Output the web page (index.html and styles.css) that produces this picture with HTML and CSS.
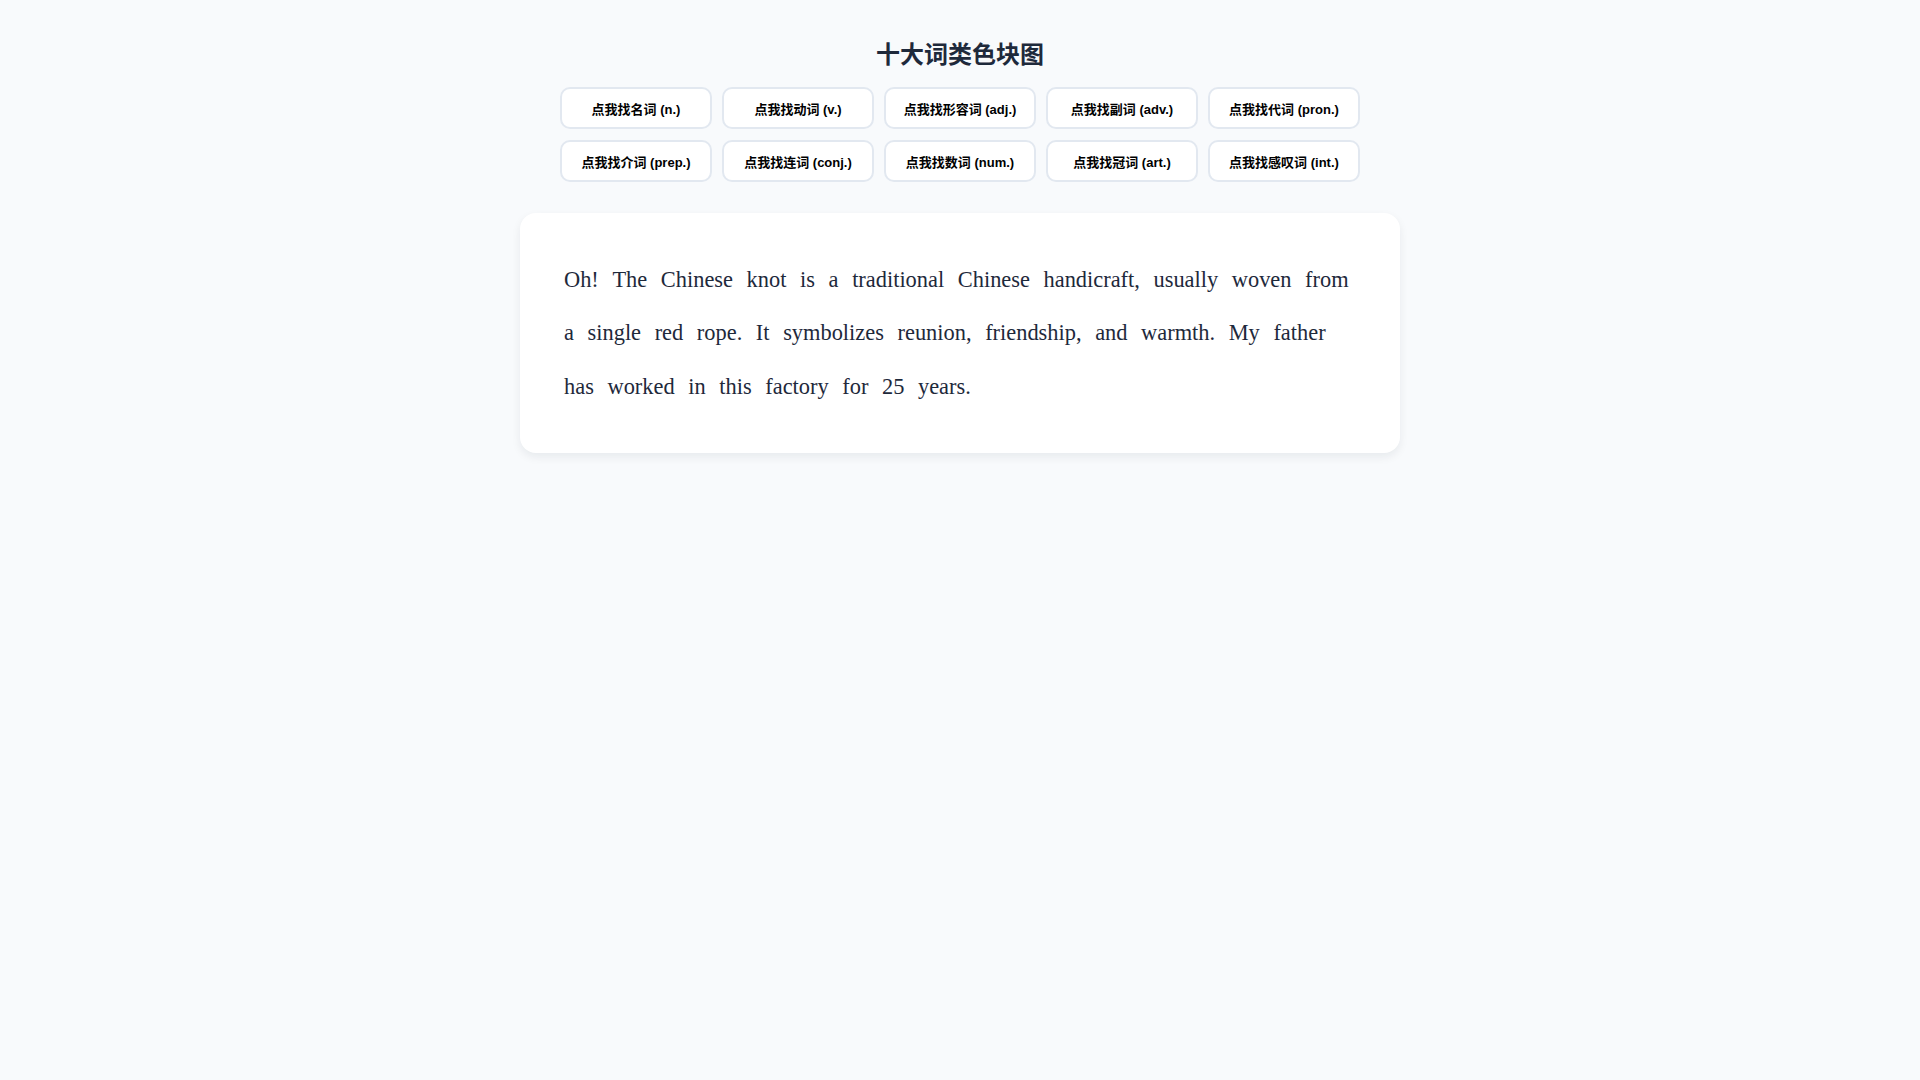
FILE: index.html
```html
<!DOCTYPE html>
<html lang="zh">
<head>
<meta charset="utf-8">
<title>十大词类色块图</title>
<link rel="stylesheet" href="styles.css">
</head>
<body>
<main class="page">
  <h1 class="title">十大词类色块图</h1>
  <div class="buttons">
    <button class="btn">点我找名词 (n.)</button>
    <button class="btn">点我找动词 (v.)</button>
    <button class="btn">点我找形容词 (adj.)</button>
    <button class="btn">点我找副词 (adv.)</button>
    <button class="btn">点我找代词 (pron.)</button>
    <button class="btn">点我找介词 (prep.)</button>
    <button class="btn">点我找连词 (conj.)</button>
    <button class="btn">点我找数词 (num.)</button>
    <button class="btn">点我找冠词 (art.)</button>
    <button class="btn">点我找感叹词 (int.)</button>
  </div>
  <section class="card">
    <p class="text"><span class="w">Oh!</span> <span class="w">The</span> <span class="w">Chinese</span> <span class="w">knot</span> <span class="w">is</span> <span class="w">a</span> <span class="w">traditional</span> <span class="w">Chinese</span> <span class="w">handicraft,</span> <span class="w">usually</span> <span class="w">woven</span> <span class="w">from</span> <span class="w">a</span> <span class="w">single</span> <span class="w">red</span> <span class="w">rope.</span> <span class="w">It</span> <span class="w">symbolizes</span> <span class="w">reunion,</span> <span class="w">friendship,</span> <span class="w">and</span> <span class="w">warmth.</span> <span class="w">My</span> <span class="w">father</span> <span class="w">has</span> <span class="w">worked</span> <span class="w">in</span> <span class="w">this</span> <span class="w">factory</span> <span class="w">for</span> <span class="w">25</span> <span class="w">years.</span></p>
  </section>
</main>
</body>
</html>
```
FILE: styles.css
```css
html, body {
  margin: 0;
  padding: 0;
  background: #f8fafc;
}
body {
  font-family: "Liberation Sans", Arial, "Noto Sans CJK SC", sans-serif;
  color: #1e293b;
}
.page {
  display: flex;
  flex-direction: column;
  align-items: center;
  padding: 37px 20px 40px;
}
.title {
  margin: 0 0 15px;
  font-size: 24px;
  font-weight: 700;
  line-height: 35px;
  color: #1e293b;
  font-family: "Liberation Sans", "Noto Sans CJK SC", sans-serif;
}
.buttons {
  display: grid;
  grid-template-columns: repeat(5, 1fr);
  gap: 11px 10px;
  width: 800px;
}
.btn {
  height: 42px;
  background: #ffffff;
  border: 2px solid #e2e8f0;
  border-radius: 10px;
  font-family: "Liberation Sans", Arial, "Noto Sans CJK SC", sans-serif;
  font-size: 13px;
  font-weight: 700;
  color: #000000;
  padding: 0 6px;
  cursor: pointer;
}
.card {
  margin-top: 31px;
  width: 880px;
  box-sizing: border-box;
  background: #ffffff;
  border-radius: 16px;
  padding: 40px;
  box-shadow: 0 4px 10px rgba(15, 23, 42, 0.07);
}
.text {
  margin: 0;
  font-family: "Liberation Serif", "Times New Roman", serif;
  font-size: 22.4px;
  line-height: 2.38;
  color: #1e293b;
}
.w {
  margin: 0 4px;
}
```
